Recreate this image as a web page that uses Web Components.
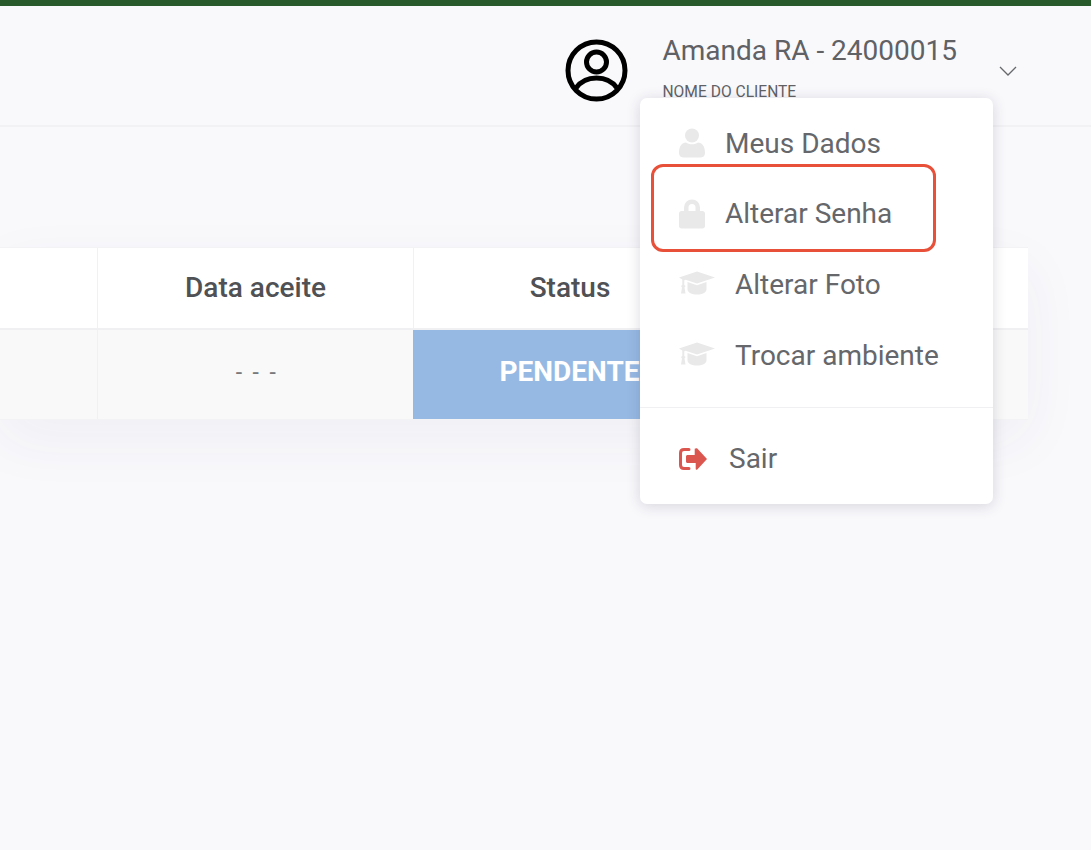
<!DOCTYPE html>
<html lang="pt">
<head>
<meta charset="utf-8">
<title>Alterar Senha</title>
<style>
  html, body { margin: 0; height: 100%; }
  body { background: #f9f9fc; font-family: Roboto, "Liberation Sans", sans-serif; overflow: hidden; }
</style>
</head>
<body>
<app-shell>
  <user-header slot="header" name="Amanda RA - 24000015" role="NOME DO CLIENTE"></user-header>
  <data-table slot="content"></data-table>
  <user-menu slot="overlay"></user-menu>
</app-shell>

<script>
// --- Icons ---
const ICONS = {
    user: '<svg width="26" height="30" viewBox="0 0 26 30"><circle cx="13" cy="7.5" r="7" fill="currentColor"/><path d="M0 25c0-7 3-10.500 7-10.500 1.500 1 3.500 1.800 6 1.800s4.500-.8 6-1.800c4 0 7 3.500 7 10.500 0 3-2 4.500-5 4.500H5c-3 0-5-1.500-5-4.500z" fill="currentColor"/></svg>',
    lock: '<svg width="26" height="30" viewBox="0 0 26 30"><path d="M5 12V8.500a8 8 0 0 1 16 0V12h2.500c1.400 0 2.500 1.100 2.500 2.500V27c0 1.400-1.100 2.500-2.500 2.500h-21C1.100 29.500 0 28.400 0 27V14.500C0 13.100 1.100 12 2.500 12zm4.500 0h7V8.500a3.500 3.500 0 0 0-7 0z" fill="currentColor" fill-rule="evenodd"/></svg>',
    cap: '<svg width="36" height="26" viewBox="0 0 36 26"><path d="M18 .5 36 6.500 18 12.500 6.500 8.700 5.300 9.300V14l1.200 1-1 1.500 1 6H2l1-6-1-1.500 1.300-1V8.500L0 6.500z" fill="currentColor"/><path d="M8.500 11 18 14.300 27.500 11v7.500c0 3-4.500 5-9.500 5s-9.500-2-9.500-5z" fill="currentColor"/></svg>',
    exit: '<svg width="28" height="22" viewBox="0 0 28 22"><path d="M10 1.500H5C2.800 1.500 1.500 2.800 1.500 5v12c0 2.200 1.300 3.500 3.500 3.500h5" fill="none" stroke="currentColor" stroke-width="3" stroke-linecap="round"/><path d="M17 .5c.3-.4 1-.3 1.300 0L28 11l-9.700 10.500c-.3.300-1 .4-1.300 0-.2-.2-.3-.4-.3-.7V15H8.500C7.700 15 7 14.300 7 13.500v-5C7 7.700 7.700 7 8.500 7h7.200V1.200c0-.3.100-.5.300-.7z" fill="currentColor"/></svg>'
};

// --- <app-shell>: page frame ---
class AppShell extends HTMLElement {
    constructor() {
        super();
        this.attachShadow({ mode: 'open' }).innerHTML = `
            <style>
                :host { display: block; position: relative; height: 850px; overflow: hidden; }
                .bar { height: 6px; background: #285a2b; }
                main { padding: 120px 63px 0 0; }
            </style>
            <div class="bar"></div>
            <slot name="header"></slot>
            <main><slot name="content"></slot></main>
            <slot name="overlay"></slot>
        `;
    }
}
customElements.define('app-shell', AppShell);

// --- <user-header> ---
class UserHeader extends HTMLElement {
    connectedCallback() {
        this.attachShadow({ mode: 'open' }).innerHTML = `
            <style>
                :host { display: flex; align-items: flex-start; justify-content: flex-end; box-sizing: border-box; height: 121px; padding: 30px 74px 0 0; border-bottom: 2px solid #f2f2f5; }
                svg.avatar { display: block; margin: 3px 34px 0 0; flex: none; }
                .name { font-size: 28px; line-height: 30px; color: #5f6165; white-space: nowrap; }
                .role { font-size: 15.600px; line-height: 18px; margin-top: 17px; color: #5f6165; white-space: nowrap; }
                svg.chev { display: block; margin: 30px 0 0 42px; flex: none; }
            </style>
            <svg class="avatar" width="63" height="63" viewBox="0 0 63 63" fill="none" stroke="#000" stroke-width="5">
                <circle cx="31.500" cy="31.500" r="28.500"/>
                <circle cx="31.500" cy="23" r="10"/>
                <path d="M11 49c5-7 12-10 20.500-10s15.500 3 20.500 10"/>
            </svg>
            <div>
                <div class="name">${this.getAttribute('name')}</div>
                <div class="role">${this.getAttribute('role')}</div>
            </div>
            <svg class="chev" width="18" height="11" viewBox="0 0 18 11" fill="none" stroke="#66686c" stroke-width="1.300"><path d="M1 1l8 8 8-8"/></svg>
        `;
    }
}
customElements.define('user-header', UserHeader);

// --- <data-table> ---
class DataTable extends HTMLElement {
    constructor() {
        super();
        this.attachShadow({ mode: 'open' }).innerHTML = `
            <style>
                :host { display: block; box-shadow: 0 20px 60px rgba(60,60,90,.05); }
                .row { display: grid; grid-template-columns: 97px 316px 313px 1fr; }
                .head { height: 81px; background: #fff; border-top: 1px solid #f3f3f5; box-sizing: border-box; }
                .body { height: 89px; background: #f9f9f9; border-top: 2px solid #f0f0f2; border-bottom: 1px solid #f3f3f5; box-sizing: content-box; }
                .cell { display: flex; align-items: center; justify-content: center; box-sizing: border-box; border-left: 1px solid #f1f1f3; }
                .cell:first-child { border-left: 0; }
                .head .cell { font-size: 28px; font-weight: 500; color: #4f5155; padding-bottom: 2px; }
                .body .cell { font-size: 23px; color: #77797c; }
                .body .status { background: #96b9e3; color: #fff; font-size: 28px; font-weight: 700; border-left: 0; padding-bottom: 6px; }
                .dash { letter-spacing: 2.400px; padding: 0 0 5px 3px; }
            </style>
            <div class="row head">
                <div class="cell"></div>
                <div class="cell">Data aceite</div>
                <div class="cell">Status</div>
                <div class="cell"></div>
            </div>
            <div class="row body">
                <div class="cell"></div>
                <div class="cell dash">- - -</div>
                <div class="cell status">PENDENTE</div>
                <div class="cell"></div>
            </div>
        `;
    }
}
customElements.define('data-table', DataTable);

// --- <menu-item> ---
class MenuItem extends HTMLElement {
    connectedCallback() {
        const label = this.textContent;
        this.attachShadow({ mode: 'open' }).innerHTML = `
            <style>
                :host { display: flex; align-items: center; height: 70.600px; padding-left: 39px; color: #e9e9ea; font-size: 28px; }
                .icon { display: flex; flex: none; width: var(--icon-w, 46px); }
                svg { display: block; }
                span { color: #65676b; white-space: nowrap; }
            </style>
            <div class="icon">${ICONS[this.getAttribute('icon')]}</div>
            <span>${label}</span>
        `;
    }
}
customElements.define('menu-item', MenuItem);

// --- <user-menu>: dropdown above the page ---
class UserMenu extends HTMLElement {
    constructor() {
        super();
        this.attachShadow({ mode: 'open' }).innerHTML = `
            <style>
                :host { display: block; position: absolute; left: 640px; top: 98px; width: 353px; height: 406px; box-sizing: border-box; padding-top: 10px; background: #fff; border-radius: 7px; box-shadow: 0 2px 14px rgba(50,50,70,.18); }
                hr { border: 0; border-top: 1px solid #f0f0f2; margin: 17px 0 15px; }
                .wide { --icon-w: 56px; }
                .exit { --icon-w: 50px; color: #dc5650; }
                .mark { position: absolute; left: 11px; top: 66px; width: 285px; height: 88px; box-sizing: border-box; border: 3px solid #e8503a; border-radius: 12px; }
            </style>
            <menu-item icon="user">Meus Dados</menu-item>
            <menu-item icon="lock">Alterar Senha</menu-item>
            <menu-item icon="cap" class="wide">Alterar Foto</menu-item>
            <menu-item icon="cap" class="wide">Trocar ambiente</menu-item>
            <hr>
            <menu-item icon="exit" class="exit">Sair</menu-item>
            <div class="mark"></div>
        `;
    }
}
customElements.define('user-menu', UserMenu);
</script>
</body>
</html>
